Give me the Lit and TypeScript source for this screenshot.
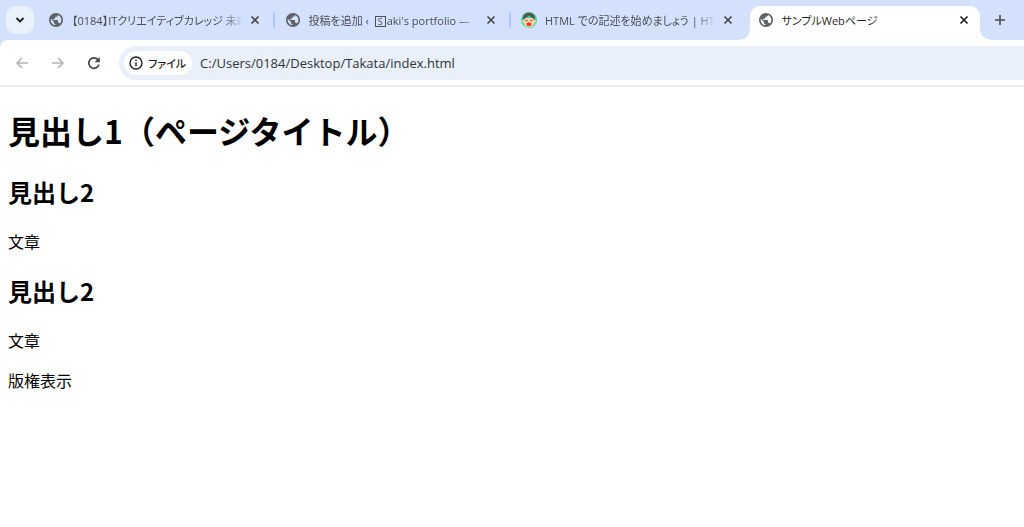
import { LitElement, html, css, svg } from "lit";
import { customElement } from "lit/decorators.js";
import { classMap } from "lit/directives/class-map.js";

const globe = html`<svg class="favicon" viewBox="0 0 24 24" aria-hidden="true">
  <path fill="#5f6368" d="M12 1.500C6.200 1.500 1.500 6.200 1.500 12S6.200 22.500 12 22.500 22.500 17.800 22.500 12 17.800 1.500 12 1.500zm-1 18.430c-3.950-.490-7-3.850-7-7.930 0-.620.080-1.210.210-1.790L9 15v1c0 1.100.900 2 2 2v1.930zm6.900-2.540c-.260-.810-1-1.390-1.900-1.390h-1v-3c0-.550-.450-1-1-1H8v-2h2c.550 0 1-.450 1-1V7h2c1.100 0 2-.900 2-2v-.410c2.930 1.190 5 4.060 5 7.410 0 2.080-.800 3.970-2.100 5.390z"/>
</svg>`;

const face = html`<svg class="favicon" viewBox="0 0 16 16" aria-hidden="true">
  <circle cx="8" cy="8" r="8" fill="#3ddc97"/>
  <ellipse cx="2.200" cy="9" rx="1.300" ry="1.600" fill="#f2c79c"/>
  <ellipse cx="13.800" cy="9" rx="1.300" ry="1.600" fill="#f2c79c"/>
  <path fill="#f6d3ac" d="M2.500 6h11v4.500c0 3-2.500 4.800-5.500 4.800s-5.500-1.800-5.500-4.800z"/>
  <path fill="#5a5552" d="M2 8C1.500 3.300 4 .8 8 .8S14.500 3.300 14 8L12 6.500 10 5 8 3.800 6 5 4 6.500z"/>
  <path stroke="#5a5552" stroke-width="1" d="M4.500 8.500h2M9.500 8.500h2"/>
  <path fill="#e0402f" d="M5.500 12.500c0-1.500 1-2.200 2.500-2.200s2.500.7 2.500 2.200-1 1.500-2.500 1.500-2.500 0-2.500-1.500z"/>
</svg>`;

const stroked = (size: number, width: number, shape: unknown) => html`<svg
  width=${size} height=${size} viewBox="0 0 ${size} ${size}" fill="none"
  stroke="currentColor" stroke-width=${width} aria-hidden="true">${shape}</svg>`;

const cross = stroked(10, 1.7, svg`<path d="M1.500 1.500l7 7M8.500 1.500l-7 7"/>`);

const tabs = [
  { icon: globe, title: html`【0184】ITクリエイティブカレッジ 未経`, active: false, line: true },
  { icon: globe, title: html`投稿を追加 ‹ <span class="boxed">S</span>aki's portfolio —`, active: false, line: true },
  { icon: face, title: html`HTML での記述を始めましょう | HTM`, active: false, line: false },
  { icon: globe, title: html`サンプルWebページ`, active: true, line: false },
];

@customElement("browser-tabs")
class BrowserTabs extends LitElement {
  static styles = css`
    :host { display: flex; align-items: center; height: 40px; padding: 0 10px 0 6px; background: #d3e1fd; }
    button { border: 0; padding: 0; background: none; color: #474747; font: inherit; display: grid; place-items: center; flex: none; }
    .search { width: 28px; height: 28px; border-radius: 10px; background: #e9f1fb; color: #1f1f1f; margin-right: 6px; }
    .tabs { display: flex; flex: 1; min-width: 0; align-self: stretch; align-items: center; }
    .tab { flex: 1 1 0; min-width: 0; height: 34px; margin-top: 6px; padding: 0 8px; box-sizing: border-box; display: flex; align-items: center; position: relative; color: #4a4d52; border-radius: 10px 10px 0 0; }
    .active { background: #fff; color: #1f1f1f; }
    .active::before, .active::after { content: ""; position: absolute; bottom: 0; width: 10px; height: 10px; }
    .active::before { right: 100%; background: radial-gradient(circle at 0 0, #0000 9px, #fff 10px); }
    .active::after { left: 100%; background: radial-gradient(circle at 100% 0, #0000 9px, #fff 10px); }
    .active button { color: #1f1f1f; }
    .favicon { width: 16px; height: 16px; flex: none; margin: 0 8px 6px 0; }
    .title { flex: 1; min-width: 0; overflow: hidden; white-space: nowrap; height: 20px; line-height: 20px; margin-bottom: 4px; font-size: 11px; font-feature-settings: "palt"; mask-image: linear-gradient(to left, #0000, #000 20px); }
    .active .title { mask-image: none; }
    .boxed { display: inline-block; width: 9px; height: 9px; line-height: 9px; border: 1px solid; font-size: 9px; text-align: center; margin: 0 1px 0 3px; }
    .close { width: 16px; height: 16px; margin: 0 0 6px 4px; }
    .line { flex: none; width: 2px; height: 16px; margin: 0 2px; border-radius: 1px; }
    .shown { background: #a8c7fa; }
    .new { width: 28px; height: 28px; margin-left: 6px; }
  `;
  render() {
    return html`
      <button class="search" aria-label="タブを検索">${stroked(10, 1.8, svg`<path d="M1.500 3l3.500 3.500L8.500 3"/>`)}</button>
      <div class="tabs" role="tablist">
        ${tabs.map((t, i) => html`
          <div class=${classMap({ tab: true, active: t.active })} role="tab" aria-selected=${t.active}>
            ${t.icon}<span class="title">${t.title}</span>
            <button class="close" aria-label="閉じる">${cross}</button>
          </div>
          ${i < tabs.length - 1 ? html`<span class=${classMap({ line: true, shown: t.line })}></span>` : ""}`)}
      </div>
      <button class="new" aria-label="新しいタブ">${stroked(12, 1.6, svg`<path d="M6 1v10M1 6h10"/>`)}</button>`;
  }
}

@customElement("browser-toolbar")
class BrowserToolbar extends LitElement {
  static styles = css`
    :host { display: block; background: #d3e1fd; }
    .bar { display: flex; align-items: center; height: 45px; padding-left: 8px; background: #fff; border-bottom: 2px solid #eeeeef; border-radius: 8px 0 0 0; box-sizing: content-box; }
    button { border: 0; padding: 0; background: none; font: inherit; color: #474747; }
    .nav { width: 28px; height: 28px; margin-right: 8px; display: grid; place-items: center; flex: none; }
    .off { color: #b4b4b4; }
    .omnibox { flex: 1; min-width: 0; height: 34px; margin-left: 3px; padding-left: 5px; display: flex; align-items: center; background: #e9f0f9; border-radius: 17px 0 0 17px; }
    .chip { display: flex; align-items: center; gap: 5px; height: 24px; padding: 0 6px 0 5px; border-radius: 12px; background: #fff; color: #1f1f1f; font-size: 11px; font-weight: 500; font-feature-settings: "palt"; white-space: nowrap; }
    .url { flex: 1; min-width: 0; border: 0; padding: 0; margin-left: 8px; background: none; outline: none; font: inherit; font-size: 13px; line-height: 20px; color: #30343a; }
  `;
  render() {
    return html`<div class="bar">
      <button class="nav off" aria-label="戻る">${stroked(14, 1.5, svg`<path d="M13 7H2M7 2L2 7l5 5"/>`)}</button>
      <button class="nav off" aria-label="進む">${stroked(14, 1.5, svg`<path d="M1 7h11M7 2l5 5-5 5"/>`)}</button>
      <button class="nav" aria-label="再読み込み">${stroked(14, 1.7, svg`<path d="M12 8.600A5.200 5.200 0 1 1 11 3.700"/><path fill="currentColor" stroke="none" d="M12.800 1v5.200H7.600z"/>`)}</button>
      <div class="omnibox">
        <button class="chip">${stroked(14, 1.4, svg`<circle cx="7" cy="7" r="6"/><path d="M7 6.300v4M7 3.600v1.500"/>`)}ファイル</button>
        <input class="url" aria-label="アドレス" value="C:/Users/0184/Desktop/Takata/index.html" spellcheck="false">
      </div>
    </div>`;
  }
}

@customElement("app-root")
class AppRoot extends LitElement {
  static styles = css`
    :host { display: block; min-height: 100vh; background: #fff; color: #000; font-family: "Open Sans", "Noto Sans CJK JP", sans-serif; }
    .page { display: flow-root; padding: 0 8px; font-family: "Noto Sans CJK JP", sans-serif; font-size: 16px; line-height: 24px; }
    h1 { margin: 20px 0 21px; font-size: 32px; line-height: 46px; }
    h2 { margin: 20px 0; font-size: 24px; line-height: 35px; }
    p { margin: 16px 0; }
  `;
  render() {
    return html`
      <browser-tabs></browser-tabs>
      <browser-toolbar></browser-toolbar>
      <main class="page" lang="ja">
        <h1>見出し1（ページタイトル）</h1>
        <h2>見出し2</h2>
        <p>文章</p>
        <h2>見出し2</h2>
        <p>文章</p>
        <p>版権表示</p>
      </main>`;
  }
}
